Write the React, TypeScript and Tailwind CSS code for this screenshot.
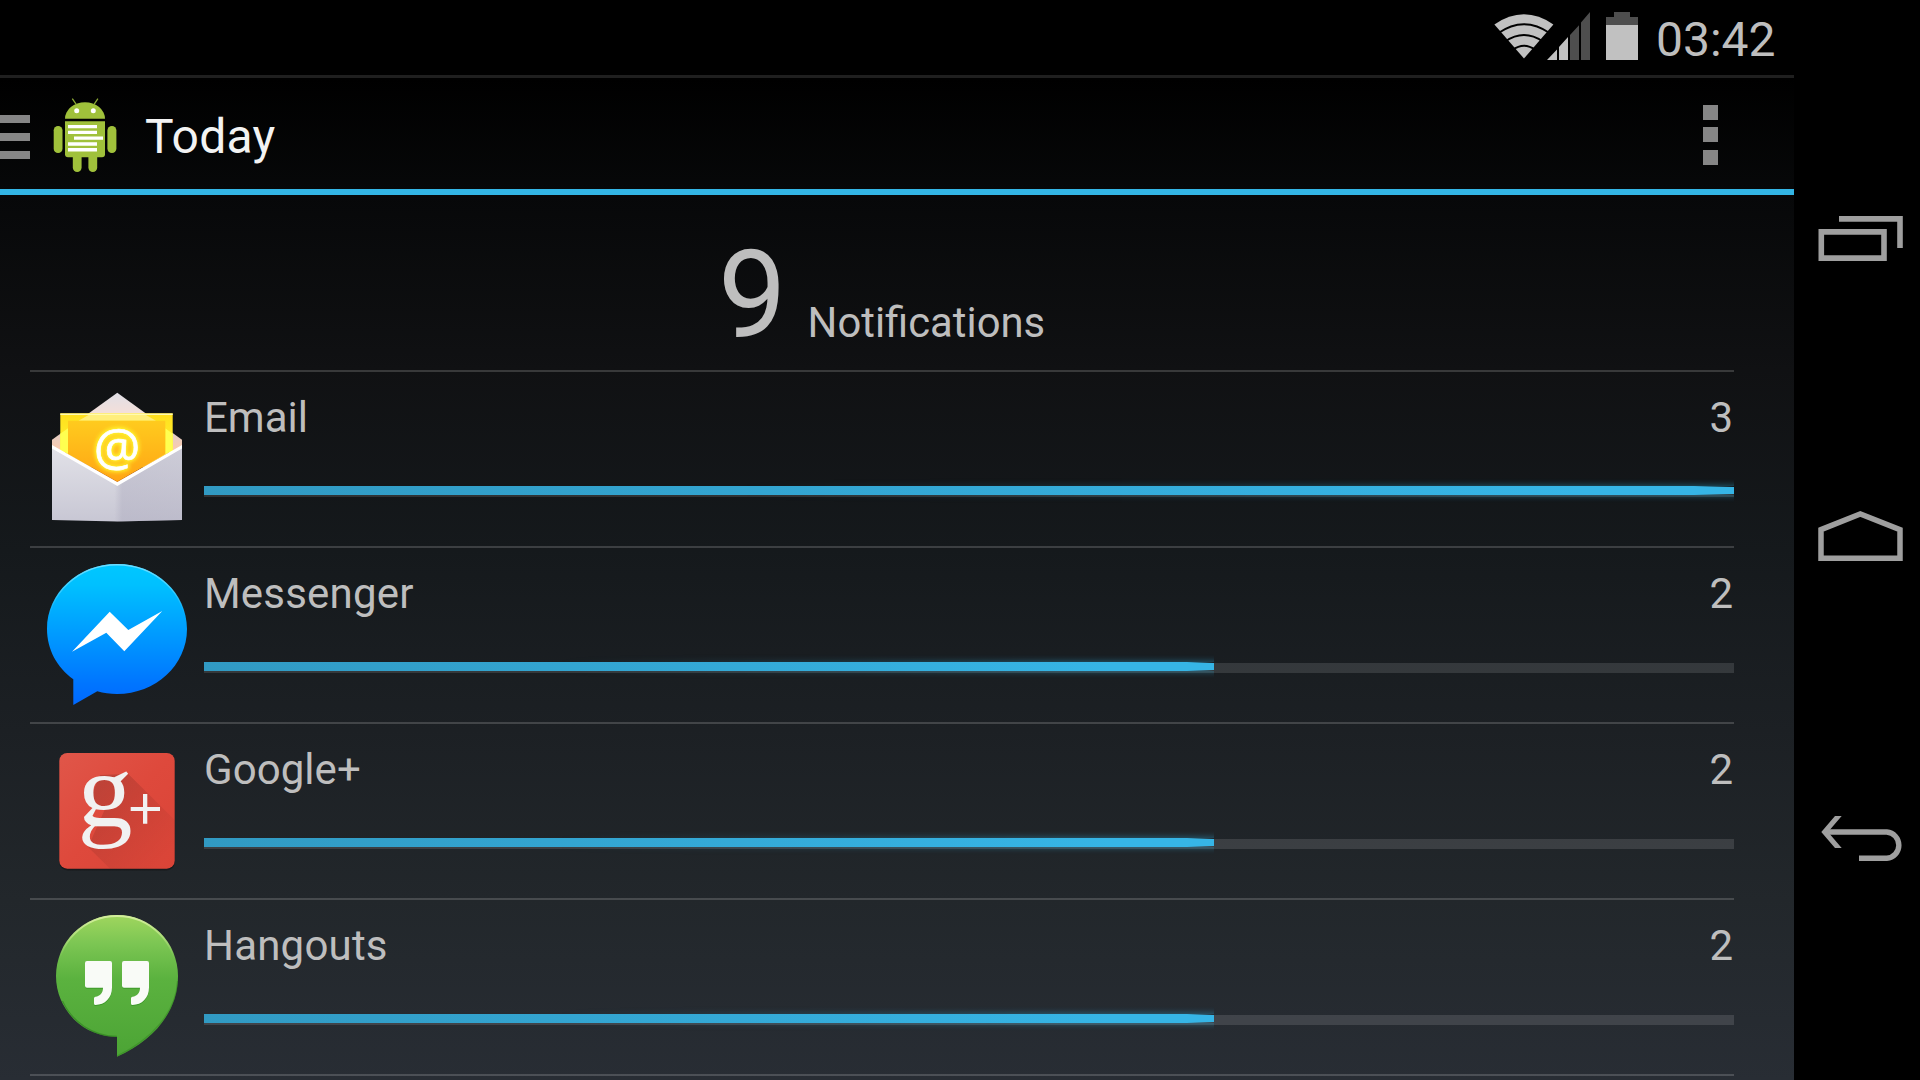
import React from "react";

function WifiIcon() {
  return (
    <svg className="block h-[50px] w-[60px] shrink-0" viewBox="0 2.3 60 50">
      <path d="M30 48.7 L0.4 14.8 Q30 -5.5 59.4 14.8 Z" fill="#c1c1c1" />
      <g fill="none" stroke="#000" strokeWidth="2">
        <path d="M4 23.6 Q30 5.4 56 23.6" />
        <path d="M11 32 Q30 18.8 49 32" />
        <path d="M18.5 40.4 Q30 31.6 41.5 40.4" />
      </g>
    </svg>
  );
}

function SignalIcon() {
  return (
    <svg className="-ml-[7px] block h-12 w-[43px] shrink-0" viewBox="0 0 43 48">
      <path d="M0 48 L10 37.5 V48Z M12 35 L21 25 V48H12Z" fill="#c1c1c1" />
      <path d="M23 23 L32 13.2 V48H23Z M34 10.5 L43 0 V48H34Z" fill="#4e4e4e" />
    </svg>
  );
}

function BatteryIcon() {
  return (
    <svg className="ml-4 block h-12 w-8 shrink-0" viewBox="0 0 32 48">
      <path d="M8 0H24V5H32V14H0V5H8Z" fill="#4e4e4e" />
      <path d="M0 13H32V48H0Z" fill="#c1c1c1" />
    </svg>
  );
}

function AppLogo() {
  return (
    <svg className="ml-5 block h-[88px] w-[70px] shrink-0" viewBox="0 0 70 88">
      <g fill="#a0c13b">
        <path d="M15 28.7 A20 16.4 0 0 1 55 28.7Z" />
        <path d="M15 31.3H55V64.3a3 3 0 0 1-3 3H18a3 3 0 0 1-3-3Z" />
        <rect x="3.7" y="36" width="8.8" height="27" rx="4.3" />
        <rect x="57.4" y="36" width="9" height="27" rx="4.4" />
        <path d="M22.8 60H31.6V77.6a4.4 4.4 0 0 1-8.8 0Z" />
        <path d="M38.4 60H47.2V77.6a4.4 4.4 0 0 1-8.8 0Z" />
      </g>
      <path d="M22.3 8.6L26.4 14.6M47.9 8.6L43.9 14.6" stroke="#8ba835" strokeWidth="1.3" />
      <g fill="#fff">
        <circle cx="26.7" cy="20.7" r="2.5" />
        <circle cx="43.3" cy="20.7" r="2.5" />
        <path d="M18 35H47v3.3H18ZM18 40.8H47v3.3H18ZM24 46.4H53v3.3H24ZM18 52.3H47v3.4H18ZM18 58.1H47v3.5H18Z" />
      </g>
    </svg>
  );
}

function EmailIcon() {
  return (
    <svg className="block size-36 overflow-visible" viewBox="0 0 144 144">
      <defs>
        <linearGradient id="flap" x1="0" y1="0" x2="0" y2="1">
          <stop offset="0" stopColor="#e0dfe6" />
          <stop offset=".38" stopColor="#f6dfd8" />
          <stop offset=".6" stopColor="#dccfcd" />
          <stop offset="1" stopColor="#ffc9a8" />
        </linearGradient>
        <linearGradient id="sheet" x1="0" y1="0" x2="0" y2="1">
          <stop offset="0" stopColor="#ffde1c" />
          <stop offset=".5" stopColor="#ffee2c" />
          <stop offset="1" stopColor="#ffff55" />
        </linearGradient>
        <linearGradient id="card" x1="0" y1="0" x2="0" y2="1">
          <stop offset="0" stopColor="#ffcb1e" />
          <stop offset="1" stopColor="#ffa414" />
        </linearGradient>
        <linearGradient id="env" x1="0" y1="0" x2="0" y2="1">
          <stop offset="0" stopColor="#e2e2e8" />
          <stop offset="1" stopColor="#c8c7d4" />
        </linearGradient>
        <linearGradient id="envShade" x1="0" y1="0" x2="1" y2="0">
          <stop offset=".48" stopColor="#a9a7bb" stopOpacity="0" />
          <stop offset=".54" stopColor="#a9a7bb" stopOpacity=".4" />
          <stop offset="1" stopColor="#a9a7bb" stopOpacity=".35" />
        </linearGradient>
        <filter id="glow" x="-30%" y="-30%" width="160%" height="160%">
          <feGaussianBlur stdDeviation="2" />
        </filter>
      </defs>
      <path d="M72.3 5.8L137 52.7V66H7V52.7Z" fill="url(#flap)" />
      <path d="M15.3 26.3H127.7V80H15.3Z" fill="url(#sheet)" />
      <path d="M15.3 26.4H127.7V28H15.3Z" fill="#fffbb0" />
      <path d="M43.5 28H101L111 33.7H33.5Z" fill="#ffee7c" />
      <path d="M15.3 46.8L23 41.2V80H15.3ZM127.7 46.8L120.3 41.2V80H127.7Z" fill="#ffff50" />
      <path d="M23 33.7H120.3V67L72.3 95L23 67Z" fill="url(#card)" />
      <path d="M20 65.5L72.3 94.5L124 65.5V70L72.3 99L20 70Z" fill="#d96f05" />
      <text x="72" y="78.5" textAnchor="middle" fontFamily="Open Sans, sans-serif" fontSize="52" fill="#ffff30" stroke="#ffff30" strokeWidth="3" filter="url(#glow)" aria-hidden="true">@</text>
      <text x="72" y="78.5" textAnchor="middle" fontFamily="Open Sans, sans-serif" fontSize="52" fill="#fff" stroke="#fff" strokeWidth="0.7">@</text>
      <path d="M7 58.5L72.3 98L137 58.5V133L72.3 134.6L7 133Z" fill="url(#env)" />
      <path d="M7 58.5L72.3 98L137 58.5V133L72.3 134.6L7 133Z" fill="url(#envShade)" />
      <path d="M7 58L72.3 95L137 58V61.5L72.3 99L7 61.5Z" fill="#fff" />
    </svg>
  );
}

function MessengerIcon() {
  return (
    <svg className="block size-36" viewBox="0 0 144 144">
      <defs>
        <linearGradient id="msgr" x1="0" y1="0" x2="0" y2="1">
          <stop offset="0" stopColor="#00c8ff" />
          <stop offset=".15" stopColor="#00c0ff" />
          <stop offset=".85" stopColor="#0075ff" />
          <stop offset="1" stopColor="#0068ff" />
        </linearGradient>
        <linearGradient id="msgrRim" x1="0" y1="0" x2="0" y2="1">
          <stop offset="0" stopColor="#6fdcff" />
          <stop offset=".4" stopColor="#6fdcff" stopOpacity="0" />
        </linearGradient>
      </defs>
      <path d="M72 1C110.7 1 142 30 142 66S110.7 131 72 131C65.2 131 58.5 130 52.3 128.3L28.3 142V116.3C12 104.5 2 86.5 2 66C2 30 33.3 1 72 1Z" fill="url(#msgr)" />
      <ellipse cx="72" cy="66" rx="69.3" ry="64.3" fill="none" stroke="url(#msgrRim)" strokeWidth="1.5" />
      <path d="M27 88.7L64.7 48.7L83.3 67L117.3 48L79.3 88.3L61.3 69.7Z" fill="#fff" />
    </svg>
  );
}

function GooglePlusIcon() {
  return (
    <svg className="block size-36 overflow-visible" viewBox="0 0 144 144">
      <defs>
        <linearGradient id="gp" x1="0" y1="0" x2="1" y2="1">
          <stop offset="0" stopColor="#e05649" />
          <stop offset=".5" stopColor="#de493c" />
          <stop offset="1" stopColor="#da4437" />
        </linearGradient>
        <linearGradient id="gpShade" x1="0.1" y1="0.1" x2="0.9" y2="0.9">
          <stop offset="0" stopColor="#000" stopOpacity=".15" />
          <stop offset="1" stopColor="#000" stopOpacity="0" />
        </linearGradient>
      </defs>
      <rect x="14.3" y="16" width="115.4" height="115.4" rx="8" fill="#000" opacity=".3" />
      <rect x="14.3" y="14" width="115.4" height="115.7" rx="8" fill="url(#gp)" />
      <path d="M83.3 35L129.7 81V122a8 8 0 0 1-8 7.7H65L43 108L60 70L45 60L55 36Z" fill="url(#gpShade)" />
      <text x="32.5" y="87" fontFamily="Liberation Serif, serif" fontSize="106" textLength="55" lengthAdjust="spacingAndGlyphs" fill="#f1f1f1">g</text>
      <path d="M85.7 68H98V55h4.3V68H115v4H102.3V84.7H98V72H85.7Z" fill="#f1f1f1" />
    </svg>
  );
}

function HangoutsIcon() {
  const quote =
    "M42 46H65a2 2 0 0 1 2 2V72.5C67 83 60 89.8 50.5 90Q49 90 49 88.5V83.5Q49 82 50.5 81.8C55 81 58 78 58 72.7H42a2 2 0 0 1-2-2V48a2 2 0 0 1 2-2Z";
  return (
    <svg className="block size-36" viewBox="0 0 144 144">
      <defs>
        <linearGradient id="ho" x1="0" y1="0" x2="0" y2="1">
          <stop offset="0" stopColor="#a0d65e" />
          <stop offset=".2" stopColor="#7cc653" />
          <stop offset=".45" stopColor="#5bb23f" />
          <stop offset="1" stopColor="#4ca435" />
        </linearGradient>
        <linearGradient id="hoRim" x1="0" y1="0" x2="0" y2="1">
          <stop offset="0" stopColor="#d3ee9c" />
          <stop offset=".35" stopColor="#d3ee9c" stopOpacity="0" />
        </linearGradient>
      </defs>
      <path d="M72 0A61 61 0 0 1 133 61C133 97 108 126 72 141.7V122A61 61 0 0 1 11 61A61 61 0 0 1 72 0Z" fill="url(#ho)" />
      <circle cx="72" cy="61" r="60" fill="none" stroke="url(#hoRim)" strokeWidth="2" />
      <path d="M17.5 86A60.4 60.4 0 0 0 72 121.4" fill="none" stroke="#31851f" strokeWidth="1.2" opacity=".7" />
      <path d="M72 141C106 125 131 98 132.5 66" fill="none" stroke="#31851f" strokeWidth="1.2" opacity=".5" />
      <g fill="#2c8a1c" opacity=".6" transform="translate(0 1)">
        <path d={quote} />
        <path d={quote} transform="translate(37 0)" />
      </g>
      <g fill="#f9fbf7">
        <path d={quote} />
        <path d={quote} transform="translate(37 0)" />
      </g>
    </svg>
  );
}

type App = { name: string; count: number; width: number; taper: number; tracking: string; icon: React.ReactNode };

const apps: App[] = [
  { name: "Email", count: 3, width: 1530, taper: 40, tracking: "tracking-normal", icon: <EmailIcon /> },
  { name: "Messenger", count: 2, width: 1010, taper: 27, tracking: "tracking-[0.2px]", icon: <MessengerIcon /> },
  { name: "Google+", count: 2, width: 1010, taper: 27, tracking: "tracking-[0.05px]", icon: <GooglePlusIcon /> },
  { name: "Hangouts", count: 2, width: 1010, taper: 27, tracking: "tracking-[0.2px]", icon: <HangoutsIcon /> },
];

function Bar({ width, taper }: { width: number; taper: number }) {
  return (
    <div className="relative mt-[44px] h-[10px] w-full bg-white/[0.12]">
      <div className="absolute -top-[9px] left-0 overflow-hidden py-2" style={{ width }}>
        <div className="absolute inset-0 py-2 [mask-image:linear-gradient(to_right,transparent_35%,black_85%)]">
          <div className="h-[9px] w-[calc(100%+8px)] shadow-[0_0_7px_#33b5e580]" />
        </div>
        <div
          className="relative h-[9px] bg-linear-to-r from-[#319ac3] to-[#36b5e6] to-90%"
          style={{
            clipPath: `polygon(0 0, calc(100% - ${taper}px) 0, 100% 1px, 100% 8px, calc(100% - ${taper}px) 9px, 0 9px)`,
          }}
        />
      </div>
    </div>
  );
}

function Row({ app }: { app: App }) {
  return (
    <li className="flex h-[176px] border-b-2 border-white/[0.17] pl-[15px]">
      <div className="mt-[15px] h-36 w-36 shrink-0">{app.icon}</div>
      <div className="ml-[15px] flex-1 pt-[21px]">
        <div className="flex h-[50px] justify-between pr-px text-[42px] leading-[50px] text-[#bebebe]">
          <span className={app.tracking}>{app.name}</span>
          <span>{app.count}</span>
        </div>
        <Bar width={app.width} taper={app.taper} />
      </div>
    </li>
  );
}

function NavBar() {
  return (
    <nav className="flex w-[126px] shrink-0 flex-col gap-[182px] bg-black pt-[178px]">
      <svg className="block h-[120px] w-[126px]" viewBox="0 0 126 120" fill="none" stroke="#9f9f9f" strokeWidth="5.6">
        <path d="M27.3 53.9H90V80.1H27.3Z" />
        <path d="M45 40.9H106V70" />
      </svg>
      <svg className="block h-[120px] w-[126px]" viewBox="0 0 126 120" fill="none" stroke="#9f9f9f" strokeWidth="5.5">
        <path d="M27 49.6L66.3 34L106 49.6V78.2H27Z" />
      </svg>
      <svg className="block h-[120px] w-[126px]" viewBox="0 0 126 120" fill="none" stroke="#9f9f9f" strokeWidth="5.4">
        <path d="M34 50H92.8a13.2 13.2 0 0 1 0 26.3H65" />
        <path d="M27.3 50L41 34H47.7L34 50L47.7 66H41Z" fill="#9f9f9f" stroke="none" />
      </svg>
    </nav>
  );
}

export default function App() {
  return (
    <div className="flex h-[1080px] w-[1920px] overflow-hidden bg-black font-['Roboto',sans-serif]">
      <div className="flex w-[1794px] shrink-0 flex-col">
        <header className="flex h-[75px] shrink-0 items-start justify-end pr-[19px] pt-3">
          <WifiIcon />
          <SignalIcon />
          <BatteryIcon />
          <span className="ml-[18px] mt-[-1px] w-[119px] whitespace-nowrap text-[48px] leading-[57px] text-[#bebebe]">03:42</span>
        </header>
        <main className="flex flex-1 flex-col border-t-[3px] border-[#1f1f1f] bg-[linear-gradient(to_bottom,#000_0px,#070809_117px,#101113_292px,#15191c_472px,#1c2024_652px,#22272b_822px,#282d34_1002px)]">
          <div className="flex h-[117px] shrink-0 border-b-[6px] border-[#33b5e5]">
            <div className="mt-[37px] flex h-11 w-[30px] flex-col justify-between">
              <i className="block h-2 bg-[#868686]" />
              <i className="block h-2 bg-[#868686]" />
              <i className="block h-2 bg-[#868686]" />
            </div>
            <div className="mt-3">
              <AppLogo />
            </div>
            <h1 className="ml-[25px] mt-[30px] flex-1 text-[48px] font-normal leading-[58px] tracking-[0.25px] text-[#f3f3f3]">Today</h1>
            <div className="mr-[76px] mt-[27px] flex w-[15px] flex-col">
              <i className="block h-[15px] bg-[#868686]" />
              <i className="mt-[7px] block h-[15px] bg-[#868686]" />
              <i className="mt-2 block h-[15px] bg-[#868686]" />
            </div>
          </div>
          <section className="mx-[30px] mr-[60px]">
            <div className="flex h-[177px] items-baseline border-b-2 border-white/[0.17] pl-[688px] pt-[31px] text-[#bebebe]">
              <span className="text-[122px] leading-[140px]">9</span>
              <span className="ml-[21px] text-[41.8px] leading-[50px]">Notifications</span>
            </div>
            <ul>
              {apps.map((app) => (
                <Row key={app.name} app={app} />
              ))}
            </ul>
          </section>
        </main>
      </div>
      <NavBar />
    </div>
  );
}
